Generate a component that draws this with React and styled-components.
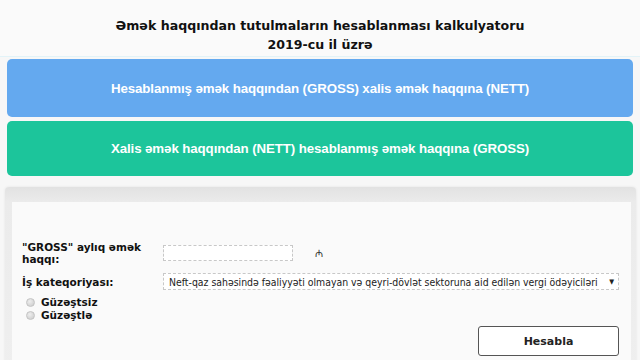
import React, { useState } from "react";
import styled, { createGlobalStyle } from "styled-components";

const GlobalStyle = createGlobalStyle`
    body {
        margin: 0;
        background: #f7f7f7;
        font-family: "DejaVu Sans", sans-serif;
        color: #111;
    }
`;

const Page = styled.div`
    width: 640px;
    height: 360px;
    overflow: hidden;
`;

const Header = styled.div`
    height: 57px;
    box-sizing: border-box;
    padding-top: 16px;
    text-align: center;
    font-size: 12.6px;
    font-weight: bold;
    line-height: 19px;
    background: #fafafa;
    border-bottom: 1px solid #e2f3f8;
`;

const Modes = styled.div`
    display: flex;
    flex-direction: column;
    gap: 4px;
    padding: 2px 7px 0 7px;
`;

const ModeButton = styled.div`
    height: ${(p) => p.$h}px;
    display: flex;
    align-items: center;
    justify-content: center;
    background: ${(p) => p.$bg};
    border-radius: 5px;
    color: #fff;
    font-family: "Liberation Sans", sans-serif;
    font-weight: bold;
    font-size: 13.3px;
    letter-spacing: -0.1px;
`;

const Card = styled.div`
    margin: 11px 4px 0 5px;
    padding: 15px 5px 0 7px;
    background: linear-gradient(#e2e2e2, #ebebeb 15px, #efefef);
    border-radius: 4px 4px 0 0;
    box-shadow: 0 0 3px rgba(0, 0, 0, 0.08);
`;

const CardBody = styled.div`
    background: #fafafa;
    height: 170px;
    padding: 39px 12px 0 10px;
    box-sizing: border-box;
`;

const Row = styled.div`
    display: grid;
    grid-template-columns: 141px 130px minmax(0, 1fr);
    align-items: center;
    margin-bottom: ${(p) => p.$mb || 0}px;
`;

const Label = styled.label`
    font-weight: bold;
    font-size: 10.5px;
    line-height: 12px;
    width: 122px;
`;

const Input = styled.div`
    width: 128px;
    height: 14px;
    border: 1px dashed #c8c8c8;
    background: #fff;
`;

const Currency = styled.span`
    font-size: 10px;
    margin-left: 22px;
    color: #333;
`;

const Select = styled.div`
    grid-column: 2 / 4;
    display: flex;
    align-items: center;
    justify-content: space-between;
    overflow: hidden;
    height: 15px;
    padding: 0 4px 0 5px;
    border: 1px dashed #c8c8c8;
    background: #fff;
    font-family: "DejaVu Sans Condensed", "DejaVu Sans", sans-serif;
    font-size: 10.4px;
    color: #222;
    white-space: nowrap;
`;

const Arrow = styled.span`
    font-size: 7px;
    margin-left: 4px;
`;

const Radios = styled.div`
    display: flex;
    flex-direction: column;
    gap: 0;
    margin-top: 6px;
    padding-left: 4px;
`;

const RadioRow = styled.label`
    display: flex;
    align-items: center;
    gap: 6px;
    font-weight: bold;
    font-size: 10.5px;
    line-height: 13px;
`;

const Dot = styled.span`
    width: 9px;
    height: 9px;
    border-radius: 50%;
    background: radial-gradient(circle at 40% 35%, #eee, #c9c9c9);
    border: 1px solid #c4c4c4;
    box-sizing: border-box;
`;

const Actions = styled.div`
    display: flex;
    justify-content: flex-end;
    margin-top: 4px;
`;

const Button = styled.button`
    width: 141px;
    height: 30px;
    border: 1px solid #555;
    border-radius: 3px;
    background: #fff;
    font-family: "DejaVu Sans", sans-serif;
    font-weight: bold;
    font-size: 11px;
    color: #222;
`;

function App() {
    const [mode] = useState("gross");
    const salaryLabel = `"${mode === "gross" ? "GROSS" : "NETT"}" aylıq əmək haqqı:`;

    return (
        <Page>
            <GlobalStyle />
            <Header>
                <div>Əmək haqqından tutulmaların hesablanması kalkulyatoru</div>
                <div>2019-cu il üzrə</div>
            </Header>
            <Modes>
                <ModeButton $bg="#64a9ef" $h={58}>
                    Hesablanmış əmək haqqından (GROSS) xalis əmək haqqına (NETT)
                </ModeButton>
                <ModeButton $bg="#1cc59b" $h={55}>
                    Xalis əmək haqqından (NETT) hesablanmış əmək haqqına (GROSS)
                </ModeButton>
            </Modes>
            <Card>
                <CardBody>
                    <Row $mb={8}>
                        <Label>{salaryLabel}</Label>
                        <Input />
                        <Currency>₼</Currency>
                    </Row>
                    <Row>
                        <Label>İş kateqoriyası:</Label>
                        <Select>
                            Neft-qaz sahəsində fəaliyyəti olmayan və qeyri-dövlət sektoruna aid edilən vergi ödəyiciləri
                            <Arrow>▼</Arrow>
                        </Select>
                    </Row>
                    <Radios>
                        <RadioRow><Dot />Güzəştsiz</RadioRow>
                        <RadioRow><Dot />Güzəştlə</RadioRow>
                    </Radios>
                    <Actions>
                        <Button>Hesabla</Button>
                    </Actions>
                </CardBody>
            </Card>
        </Page>
    );
}

export default App;
